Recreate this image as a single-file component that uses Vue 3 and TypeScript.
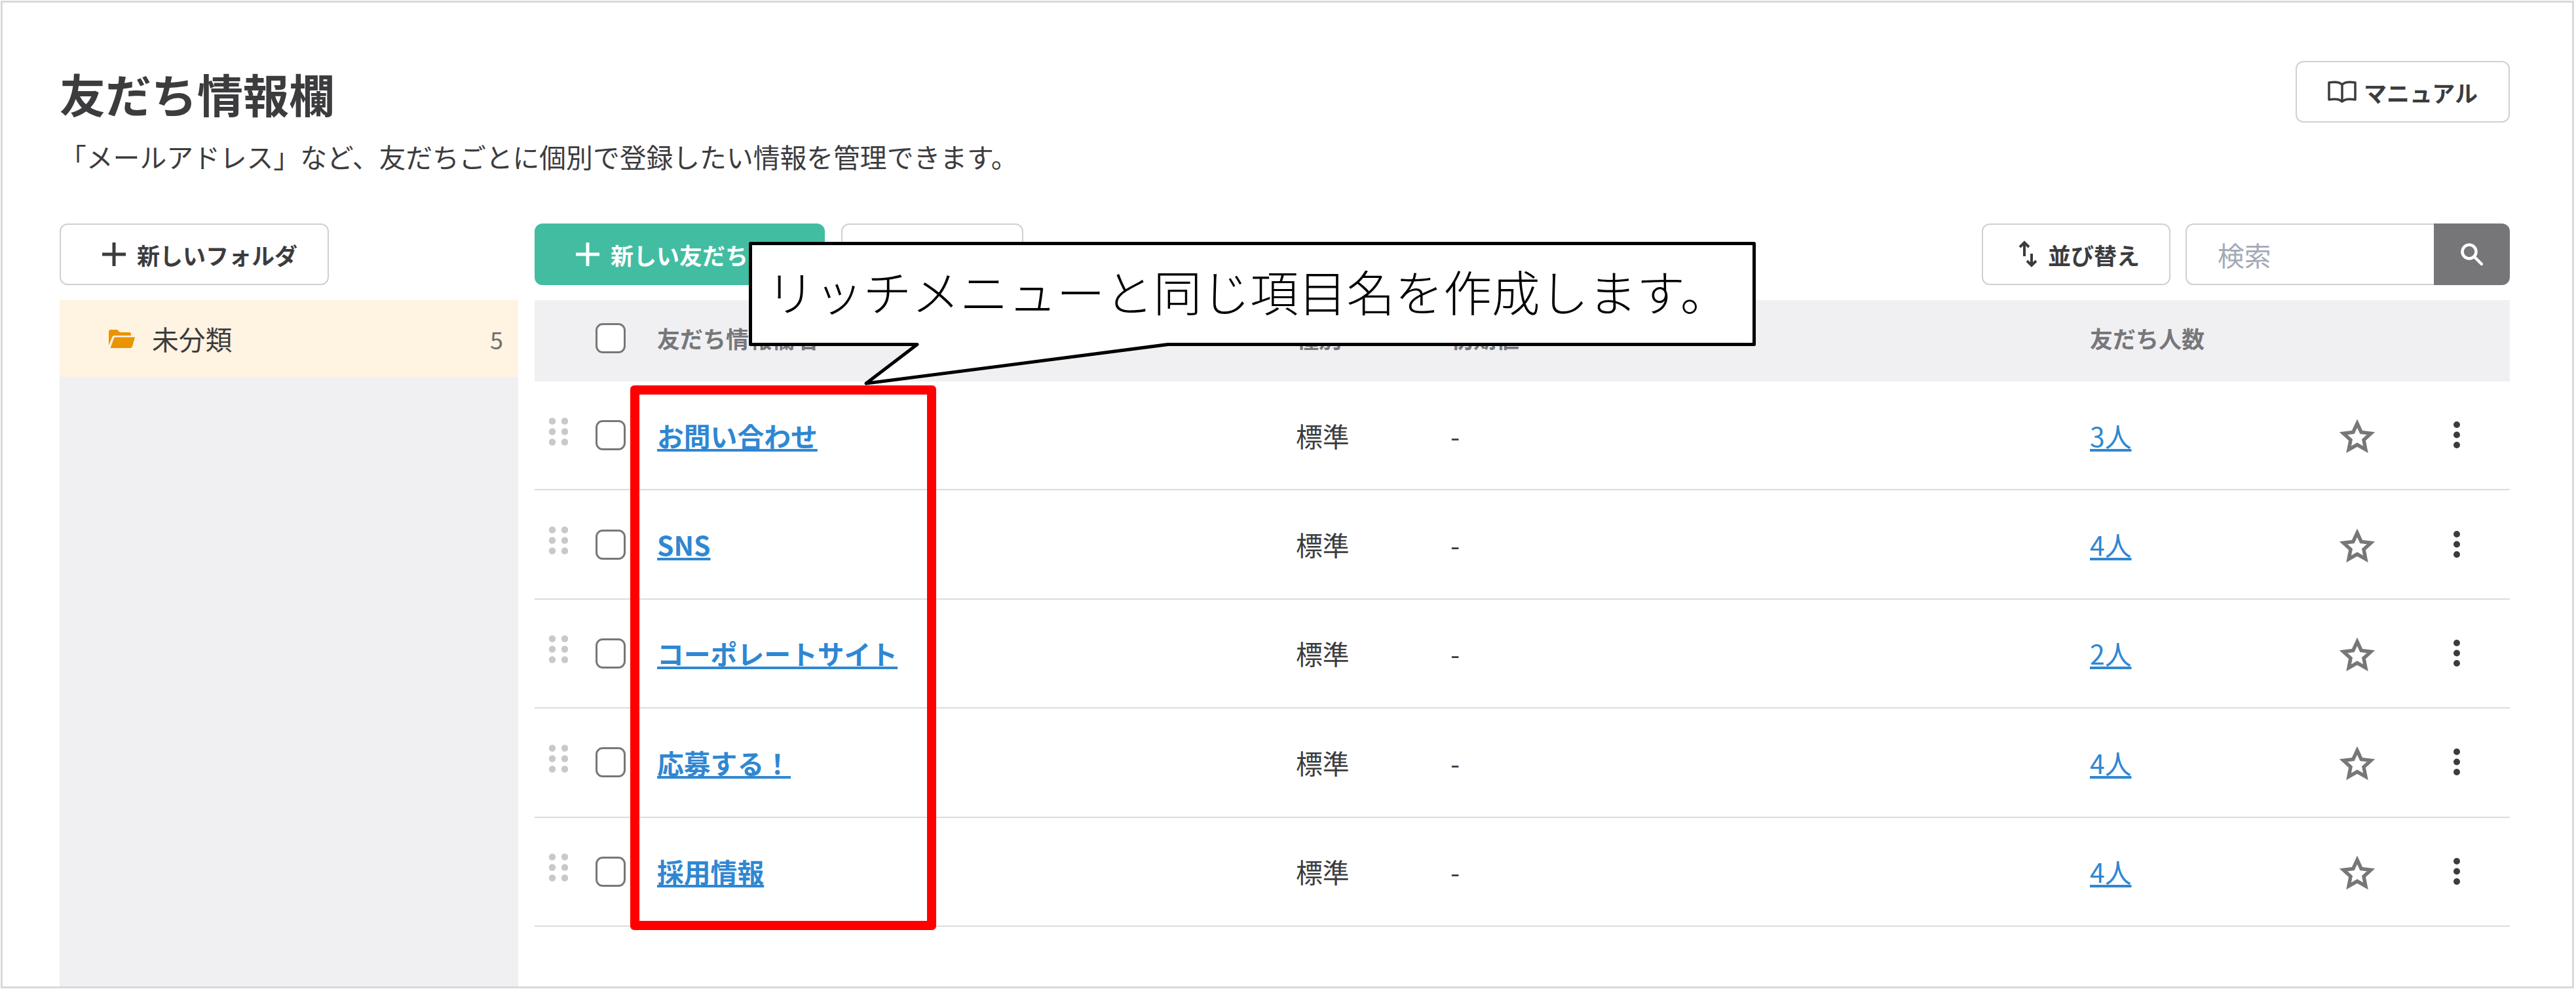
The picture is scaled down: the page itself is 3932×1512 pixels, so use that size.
<template>
  <div class="frame">
    <header class="page-head">
      <div>
        <h1 class="title">友だち情報欄</h1>
        <p class="lead">「メールアドレス」など、友だちごとに個別で登録したい情報を管理できます。</p>
      </div>
      <button class="btn manual" type="button">
        <svg class="book" viewBox="0 0 44 34" fill="none" stroke="currentColor" stroke-width="3.5" stroke-linejoin="round">
          <path d="M22 6C18 2 10 1.500 2 3V29C10 27.500 18 28 22 32C26 28 34 27.500 42 29V3C34 1.500 26 2 22 6ZM22 6V32" />
        </svg>
        マニュアル
      </button>
    </header>

    <div class="body">
      <aside class="side">
        <button class="btn folder-btn" type="button">
          <svg class="plus" viewBox="0 0 36 36" stroke="currentColor" stroke-width="5"><path d="M18 0V36M0 18H36" /></svg>
          新しいフォルダ
        </button>
        <div class="folders">
          <div class="folder active">
            <svg class="folder-icon" viewBox="0 0 40 28" fill="#e99400">
              <path d="M0 3a3 3 0 0 1 3-3h10l4 4h14a3 3 0 0 1 3 3v2H9a4 4 0 0 0-4 3L0 24z" />
              <path d="M8.500 11.500H40l-4 14a3 3 0 0 1-3 2.500H2.500z" />
            </svg>
            <span class="folder-name">未分類</span>
            <span class="folder-count">5</span>
          </div>
        </div>
      </aside>

      <main class="main">
        <div class="toolbar">
          <button class="btn primary" type="button">
            <svg class="plus" viewBox="0 0 36 36" stroke="currentColor" stroke-width="5"><path d="M18 0V36M0 18H36" /></svg>
            新しい友だち情報
          </button>
          <button class="btn blank" type="button"></button>
          <button class="btn sort" type="button">
            <svg class="sort-icon" viewBox="0 0 32 42" fill="none" stroke="currentColor" stroke-width="4">
              <path d="M10 3V24M3 10L10 3L17 10M21 20V38M14 31L21 38L28 31" />
            </svg>
            並び替え
          </button>
          <div class="search">
            <input class="search-input" type="text" placeholder="検索" />
            <span class="search-btn">
              <svg viewBox="0 0 34 34" fill="none" stroke="#fff" stroke-width="4.500" stroke-linecap="round">
                <circle cx="13" cy="13" r="10.500" />
                <path d="M21 21L32 32" />
              </svg>
            </span>
          </div>
        </div>

        <div class="row head">
          <span></span>
          <span class="check"></span>
          <span>友だち情報欄名</span>
          <span>種別</span>
          <span>初期値</span>
          <span>友だち人数</span>
        </div>
        <div v-for="item in items" :key="item.name" class="row">
          <svg class="grip" viewBox="0 0 29 43" fill="#c8c8cd">
            <circle v-for="dot in gripDots" :key="dot[0] + '-' + dot[1]" :cx="dot[0]" :cy="dot[1]" r="5.200" />
          </svg>
          <span class="check"></span>
          <a class="name" href="#">{{ item.name }}</a>
          <span>標準</span>
          <span>-</span>
          <a class="count" href="#">{{ item.count }}人</a>
          <svg class="star" viewBox="0 0 54 50" fill="none" stroke="#777779" stroke-width="5.500" stroke-miterlimit="10">
            <path d="M27 7L33.200 20.500L47.900 22.200L37 32.200L39.900 46.800L27 39.500L14.100 46.800L17 32.200L6.100 22.200L20.800 20.500Z" />
          </svg>
          <svg class="kebab" viewBox="0 0 10 42" fill="#3c3c3e">
            <circle cx="5" cy="5" r="5" /><circle cx="5" cy="20.500" r="5" /><circle cx="5" cy="36" r="5" />
          </svg>
        </div>
      </main>
    </div>

    <div class="highlight"></div>
    <div class="callout">
      <svg class="callout-shape" viewBox="0 0 1537 221" fill="#fff" stroke="#000" stroke-width="5" stroke-linejoin="round">
        <path d="M2.500 2.500H1534.500V156.500H640L179 216L257 156.500H2.500Z" />
      </svg>
      <span class="callout-text">リッチメニューと同じ項目名を作成します。</span>
    </div>
  </div>
</template>

<script setup lang="ts">
const items = [
  { name: "お問い合わせ", count: 3 },
  { name: "SNS", count: 4 },
  { name: "コーポレートサイト", count: 2 },
  { name: "応募する！", count: 4 },
  { name: "採用情報", count: 4 },
];

const gripDots = [
  [5, 5.5], [24, 5.5],
  [5, 21.5], [24, 21.5],
  [5, 37.5], [24, 37.5],
];
</script>

<style scoped>
.frame {
  position: relative;
  box-sizing: border-box;
  display: flex;
  flex-direction: column;
  width: 3928px;
  height: 1507px;
  margin: 1px 0 0 1px;
  padding: 89px 95px 0 87px;
  border: 3px solid #d9d9d9;
  background: #fff;
  color: #3c3c3e;
  font-family: "Noto Sans CJK JP", "Noto Sans", sans-serif;
  font-size: 40.8px;
}

.page-head {
  display: flex;
  justify-content: space-between;
  align-items: flex-start;
  height: 248px;
  flex-shrink: 0;
}

.title {
  margin: 0;
  font-size: 70px;
  font-weight: 700;
  line-height: 100px;
}

.lead {
  margin: 16px 0 0;
  font-size: 40.8px;
  line-height: 60px;
}

.btn {
  display: inline-flex;
  align-items: center;
  box-sizing: border-box;
  height: 94px;
  padding: 0;
  border: 2px solid #d0d0d3;
  border-radius: 12px;
  background: #fff;
  color: #3c3c3e;
  font-family: inherit;
  font-size: 35px;
  font-weight: 700;
}

.manual {
  width: 327px;
  padding-left: 47px;
  gap: 11px;
}

.book {
  width: 44px;
  height: 34px;
}

.plus {
  width: 36px;
  height: 36px;
  flex-shrink: 0;
}

.body {
  display: flex;
  flex: 1;
  gap: 25px;
  min-height: 0;
}

.side {
  display: flex;
  flex-direction: column;
  width: 700px;
  flex-shrink: 0;
}

.folder-btn {
  width: 411px;
  padding-left: 63px;
  gap: 17px;
}

.folders {
  flex: 1;
  margin-top: 23px;
  background: #f0f0f3;
}

.folder {
  display: flex;
  align-items: center;
  box-sizing: border-box;
  height: 117px;
  padding: 0 23px 0 75px;
}

.active {
  background: #fff3e1;
}

.folder-icon {
  width: 40px;
  height: 28px;
  margin-right: 26px;
}

.folder-name {
  flex: 1;
}

.folder-count {
  font-size: 36px;
  color: #6f6f72;
}

.main {
  flex: 1;
  min-width: 0;
}

.toolbar {
  display: flex;
  align-items: center;
  margin-bottom: 23px;
}

.primary {
  width: 443px;
  padding-left: 61px;
  gap: 17px;
  border-color: #42bda2;
  background: #42bda2;
  color: #fff;
}

.blank {
  width: 278px;
  margin-left: 25px;
}

.sort {
  width: 288px;
  margin-left: auto;
  padding-left: 53px;
  gap: 14px;
}

.sort-icon {
  width: 32px;
  height: 42px;
}

.search {
  display: flex;
  width: 495px;
  height: 94px;
  margin-left: 23px;
}

.search-input {
  box-sizing: border-box;
  width: 379px;
  height: 94px;
  padding: 0 0 0 47px;
  border: 2px solid #d0d0d3;
  border-right: 0;
  border-radius: 12px 0 0 12px;
  outline: none;
  font-family: inherit;
  font-size: 40.8px;
}

.search-input::placeholder {
  color: #a3aab8;
}

.search-btn {
  display: flex;
  align-items: center;
  justify-content: center;
  width: 116px;
  border-radius: 0 12px 12px 0;
  background: #767678;
}

.search-btn svg {
  width: 34px;
  height: 34px;
}

.row {
  display: grid;
  grid-template-columns: 93px 94px 975px 236px 976px 381px 174px 1fr;
  align-items: center;
  box-sizing: border-box;
  height: 166.4px;
  border-bottom: 2px solid #dcdcde;
}

.head {
  height: 124px;
  padding-bottom: 9px;
  border-bottom: 0;
  background: #f0f0f3;
  color: #77777a;
  font-size: 35px;
  font-weight: 700;
}

.check {
  box-sizing: border-box;
  width: 46px;
  height: 46px;
  border: 3px solid #77777a;
  border-radius: 11px;
  background: #fff;
}

.grip {
  width: 29px;
  height: 43px;
  margin: 0 0 12px 22px;
}

.name {
  justify-self: start;
  font-weight: 700;
  color: #2f87d2;
}

.count {
  justify-self: start;
  color: #2f87d2;
}

.star {
  width: 54px;
  height: 50px;
  overflow: visible;
}

.kebab {
  width: 10px;
  height: 42px;
}

.highlight {
  position: absolute;
  left: 958px;
  top: 584px;
  box-sizing: border-box;
  width: 467px;
  height: 831px;
  border: 14px solid #f00;
  border-radius: 6px;
}

.callout {
  position: absolute;
  left: 1139px;
  top: 365px;
  width: 1537px;
  height: 221px;
}

.callout-shape {
  position: absolute;
  inset: 0;
  width: 1537px;
  height: 221px;
}

.callout-text {
  position: absolute;
  left: 27px;
  top: 19px;
  color: #000;
  font-size: 73.8px;
  font-weight: 300;
  line-height: 110px;
  white-space: nowrap;
}
</style>

<style>
html,
body {
  margin: 0;
  background: #fff;
}
</style>
